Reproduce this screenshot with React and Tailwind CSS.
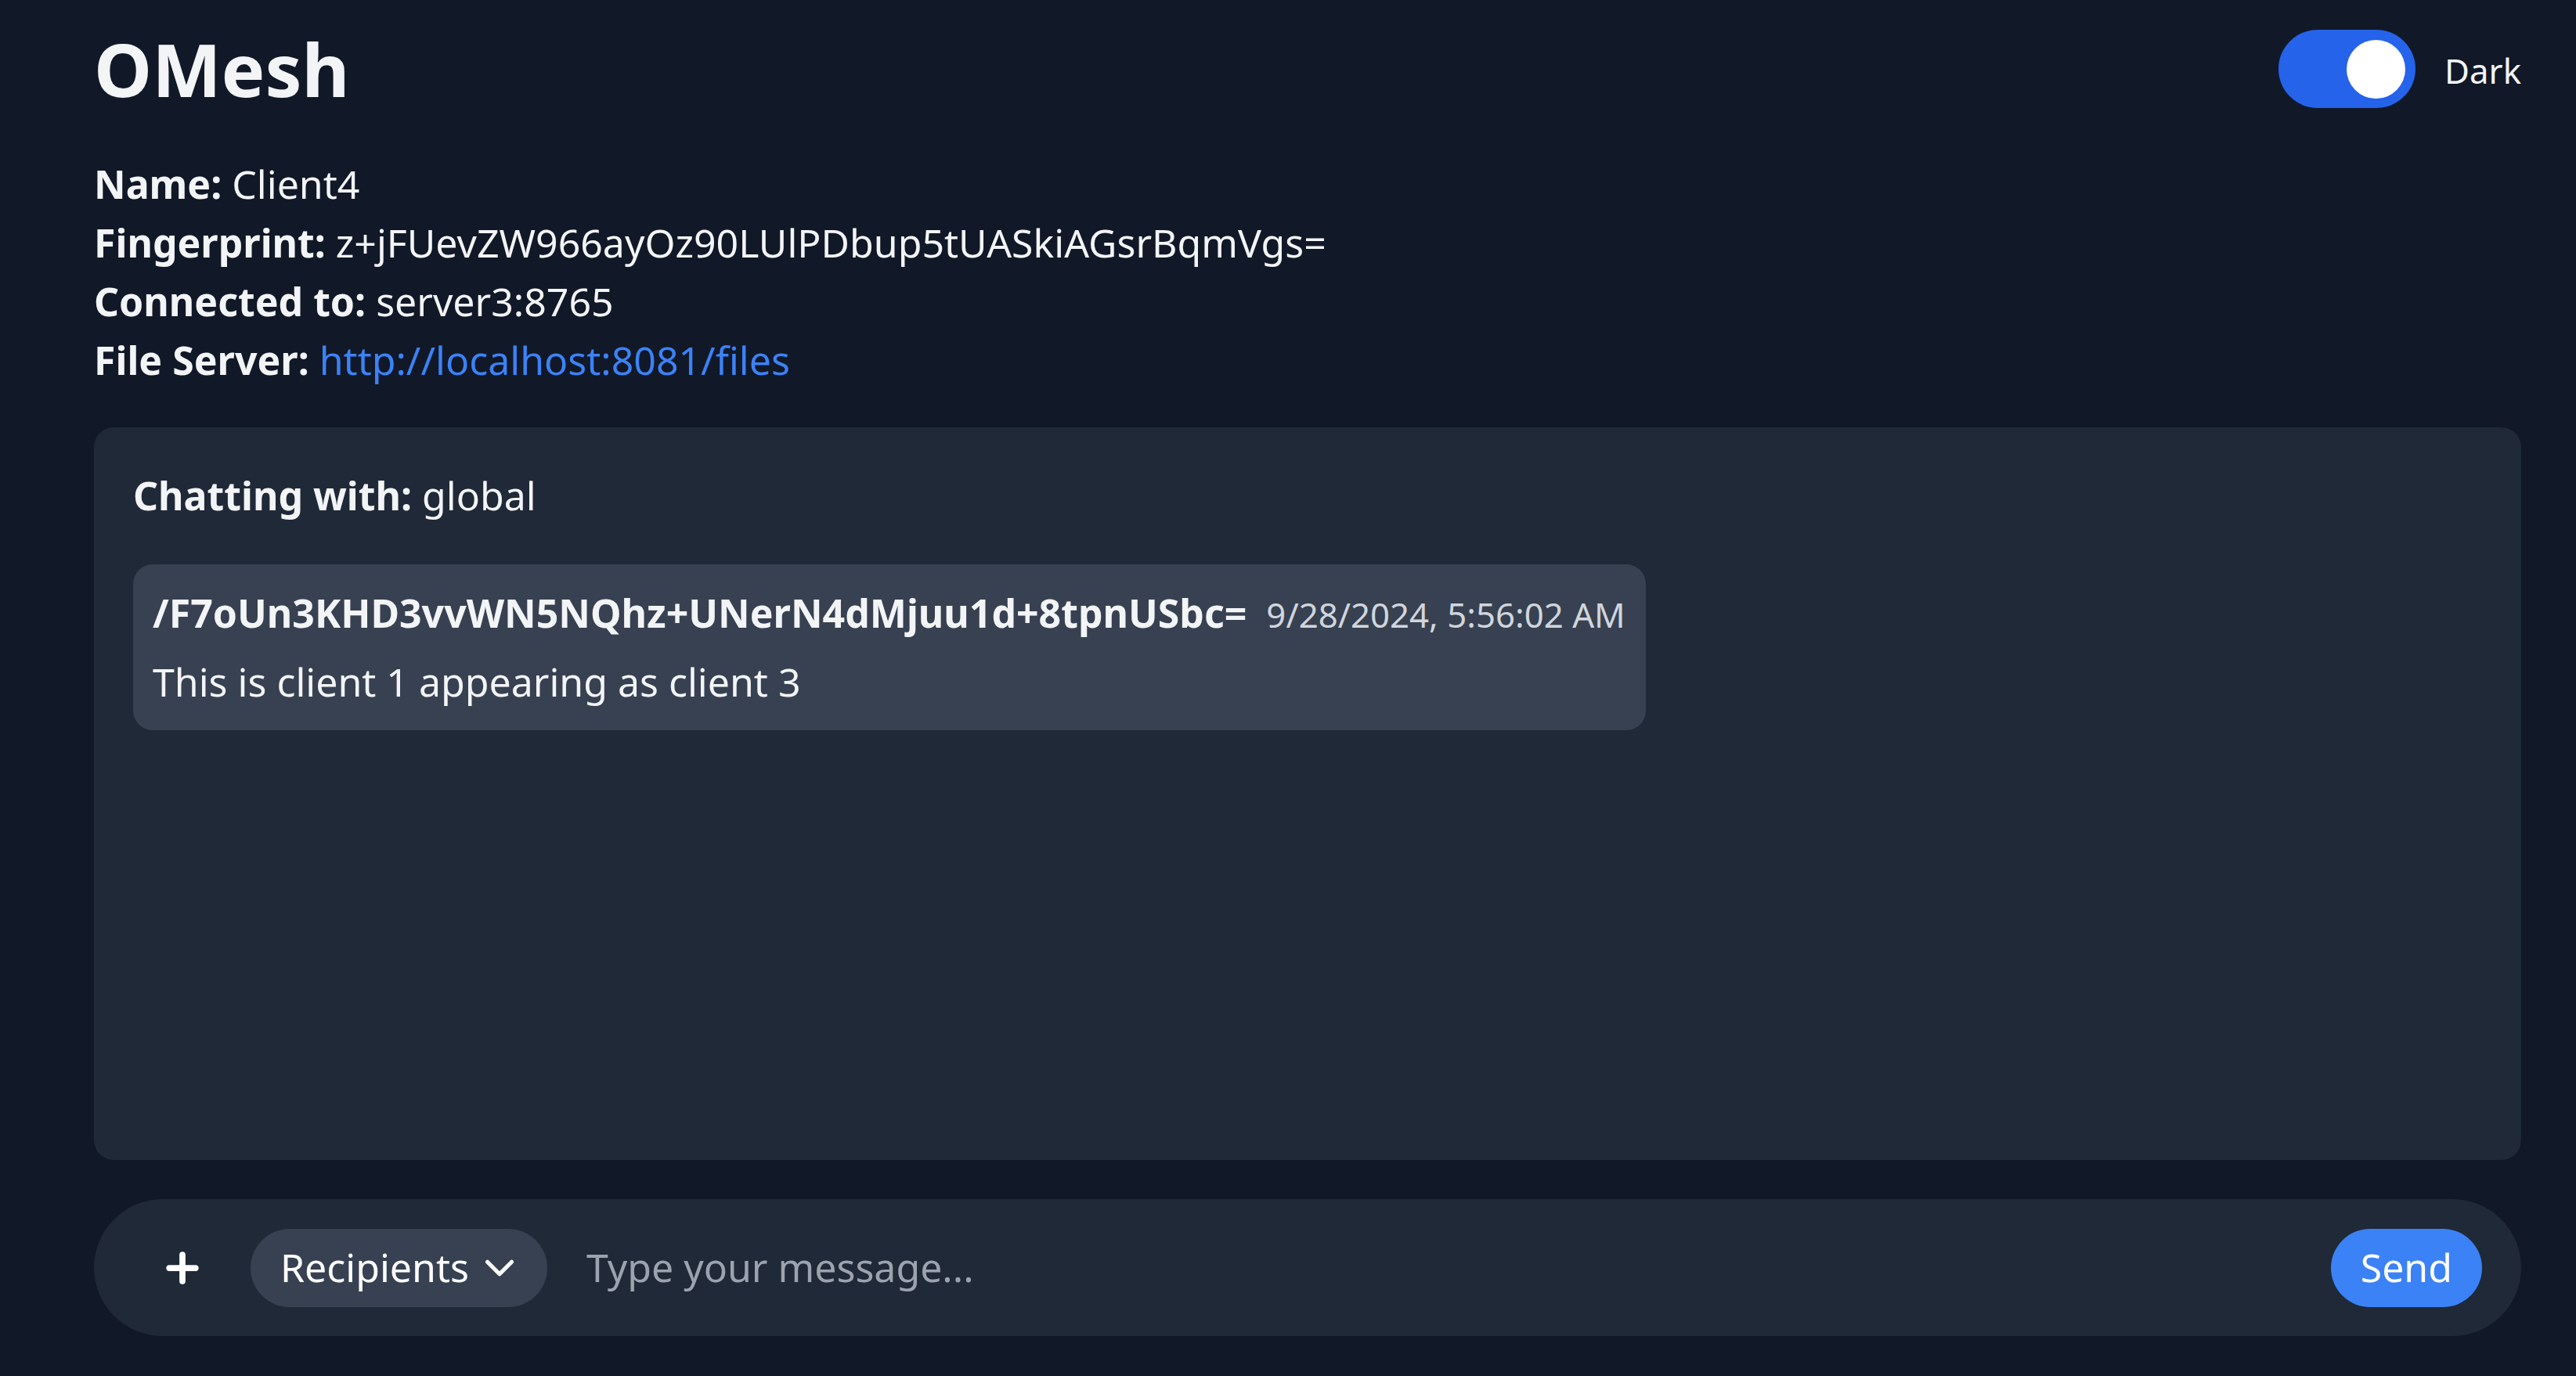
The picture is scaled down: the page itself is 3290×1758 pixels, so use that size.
import React, { useState } from 'react';
import { ChevronDown } from 'lucide-react';

const info = [
  { label: 'Name:', value: 'Client4' },
  { label: 'Fingerprint:', value: 'z+jFUevZW966ayOz90LUlPDbup5tUASkiAGsrBqmVgs=' },
  { label: 'Connected to:', value: 'server3:8765' },
];

const messages = [
  {
    from: '/F7oUn3KHD3vvWN5NQhz+UNerN4dMjuu1d+8tpnUSbc=',
    time: '9/28/2024, 5:56:02 AM',
    text: 'This is client 1 appearing as client 3',
  },
];

const PlusIcon = () => (
  <svg width="62" height="62" viewBox="0 0 24 24" fill="none" stroke="currentColor" strokeWidth="3" strokeLinecap="round">
    <path d="M12 5.5v13" />
    <path d="M5.5 12h13" />
  </svg>
);

export default function App() {
  const [dark, setDark] = useState(true);
  const [draft, setDraft] = useState('');

  return (
    <div className="h-screen flex flex-col bg-[#111827] text-gray-100 font-['Noto_Sans',sans-serif] pl-[120px] pr-[70px] pt-[32px] pb-[51px]">
      {/* Header */}
      <div className="flex items-center justify-between mb-[53px]">
        <h1 className="text-[93.75px] leading-[112.5px] font-bold text-gray-100">OMesh</h1>
        <div className="flex items-center">
          <button
            onClick={() => setDark(!dark)}
            className={`w-[175px] h-[100px] rounded-full flex items-center px-[12.5px] ${dark ? 'bg-[#2563eb] justify-end' : 'bg-gray-300 justify-start'}`}
          >
            <span className="block w-[75px] h-[75px] rounded-full bg-white" />
          </button>
          <span className="ml-[37.5px] mt-[3px] text-[43.75px] leading-[62.5px] text-gray-100">Dark</span>
        </div>
      </div>

      {/* Client info */}
      <div className="text-[50px] leading-[75px] mb-[48px]">
        {info.map((row) => (
          <p key={row.label}>
            <span className="font-bold">{row.label}</span> {row.value}
          </p>
        ))}
        <p>
          <span className="font-bold">File Server:</span>{' '}
          <a href="#" className="text-[#3b82f6]">http://localhost:8081/files</a>
        </p>
      </div>

      {/* Chat panel */}
      <div className="flex-1 min-h-0 bg-[#1f2937] rounded-[25px] p-[50px] mb-[50px] overflow-y-auto">
        <p className="text-[50px] leading-[75px] mb-[50px]">
          <span className="font-bold">Chatting with:</span> global
        </p>
        {messages.map((m, i) => (
          <div key={i} className="w-[1932px] bg-[#374151] rounded-[25px] px-[25px] pt-[25px] pb-[24px]">
            <div className="flex items-baseline mb-[13px]">
              <span className="text-[50px] leading-[75px] font-bold">{m.from}</span>
              <span className="ml-[25px] text-[43.75px] leading-[62.5px] text-gray-300">{m.time}</span>
            </div>
            <p className="text-[50px] leading-[75px]">{m.text}</p>
          </div>
        ))}
      </div>

      {/* Input bar */}
      <div className="h-[175px] shrink-0 flex items-center bg-[#1f2937] rounded-full px-[50px]">
        <button className="w-[125px] h-[100px] flex items-center justify-center text-white">
          <PlusIcon />
        </button>
        <button className="ml-[25px] h-[100px] flex items-center rounded-full bg-[#374151] pl-[38px] pr-[30px] text-[50px] leading-[75px] text-white">
          Recipients
          <ChevronDown size={62} strokeWidth={2} className="ml-[8px]" />
        </button>
        <input
          value={draft}
          onChange={(e) => setDraft(e.target.value)}
          placeholder="Type your message..."
          className="flex-1 min-w-0 ml-[25px] px-[25px] bg-transparent outline-none text-[50px] leading-[75px] text-white placeholder:text-[#9ca3af]"
        />
        <button className="h-[100px] rounded-full bg-[#3b82f6] px-[38px] text-[50px] leading-[75px] text-white">
          Send
        </button>
      </div>
    </div>
  );
}
